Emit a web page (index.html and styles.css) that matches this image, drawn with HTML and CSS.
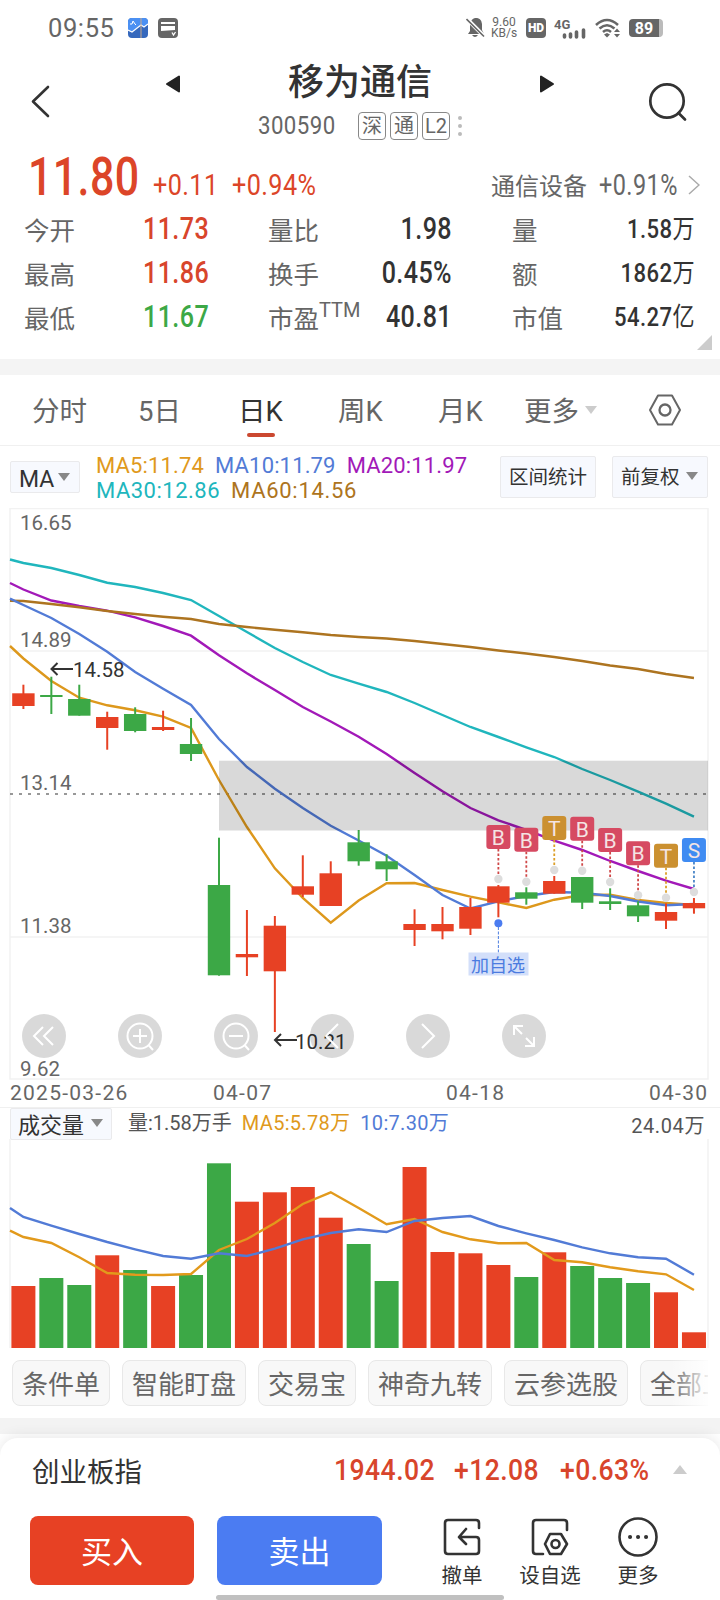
FILE: index.html
```
<!DOCTYPE html>
<html lang="zh-CN">
<head>
    <meta charset="UTF-8">
    <meta name="viewport" content="width=device-width, initial-scale=1.0">
    <title>移为通信 300590</title>
    <link rel="stylesheet" href="styles.css">
</head>
<body>
    <div class="status-bar">
        <span class="time">09:55</span>
        <svg class="app-icon" width="20" height="20" viewBox="0 0 20 20">
            <rect width="20" height="20" rx="4" fill="#3568bd"/>
            <path d="M0 12L4 14L13 7L16 9L20 6V4Q20 0 16 0H4Q0 0 0 4Z" fill="#4b90f3"/>
            <path d="M0 12L4 14L13 7L16 9L20 6" fill="none" stroke="#fff" stroke-width="1.2"/>
            <path d="M13 0V20" stroke="#c9a98b" stroke-width="1"/>
            <path d="M2 6h2l1-3 2 3 1 1" fill="none" stroke="#fff" stroke-width="1"/>
        </svg>
        <svg class="card-icon" width="20" height="20" viewBox="0 0 20 20">
            <rect width="20" height="20" rx="4" fill="#666"/>
            <path d="M3 4H17V6H3Z M3 8H17V12L3 13Z" fill="#fff"/>
            <path d="M14 14.5L15.5 17L17.5 14" fill="none" stroke="#fff" stroke-width="1.3"/>
        </svg>
        <div class="status-right">
            <svg width="20" height="20" viewBox="0 0 20 20">
                <path d="M9 0a6 6 0 0 1 7 6v6l2 4H2l2-3V6Q5 1 9 0Z M6 17h6q-3 4-6 0Z" fill="#666"/>
                <path d="M1 1L19 19" stroke="#fff" stroke-width="4"/>
                <path d="M0.500 1L18 18.500" stroke="#666" stroke-width="1.600"/>
            </svg>
            <span class="speed">9.60<br>KB/s</span>
            <span class="hd">HD</span>
            <svg class="signal" width="33" height="21" viewBox="0 0 33 21">
                <text x="0" y="10.500" class="net">4G</text>
                <path d="M10.500 19v-2M16.500 19v-3M22.500 19v-5M29.500 19v-7" stroke="#666" stroke-width="3.600" stroke-linecap="round"/>
            </svg>
            <svg width="26" height="20" viewBox="0 0 26 20">
                <path d="M1 7Q12 -3 23 7M4.500 10.500Q12 4 19.500 10.500M8 14Q12 10.500 16 14" fill="none" stroke="#666" stroke-width="2.600"/>
                <path d="M12 15l3 1.500-3 3-3-3Z" fill="#666"/>
                <path d="M19 14l3-3.500 3 3.500Z M19 16l3 3.500 3-3.500Z" fill="#666"/>
            </svg>
            <span class="battery">89</span>
        </div>
    </div>

    <header class="header">
        <svg class="back" width="20" height="34" viewBox="0 0 20 34"><path d="M17 2L2 16.500L17 31" fill="none" stroke="#333" stroke-width="2.600" stroke-linecap="round" stroke-linejoin="round"/></svg>
        <svg class="prev" width="16" height="18" viewBox="0 0 16 18"><path d="M14 1.500V16.500L2 9Z" fill="#222" stroke="#222" stroke-width="2" stroke-linejoin="round"/></svg>
        <div class="title">
            <h1>移为通信</h1>
            <div class="code-row">
                <span class="num code">300590</span>
                <span class="tag">深</span>
                <span class="tag">通</span>
                <span class="tag">L2</span>
                <svg width="4" height="20" viewBox="0 0 4 20" fill="#bbb"><circle cx="2" cy="2" r="2"/><circle cx="2" cy="10" r="2"/><circle cx="2" cy="18" r="2"/></svg>
            </div>
        </div>
        <svg class="next" width="16" height="18" viewBox="0 0 16 18"><path d="M2 1.500V16.500L14 9Z" fill="#222" stroke="#222" stroke-width="2" stroke-linejoin="round"/></svg>
        <svg class="search" width="40" height="40" viewBox="0 0 40 40" fill="none" stroke="#333" stroke-width="2.700"><circle cx="19" cy="19" r="16.700"/><path d="M30.500 31L37 37.500" stroke-linecap="round"/></svg>
    </header>

    <section class="quote">
        <div class="price-row">
            <span class="num price">11.80</span>
            <span class="num change">+0.11</span>
            <span class="num percent">+0.94%</span>
            <span class="sector">通信设备</span>
            <span class="num sector-change">+0.91%</span>
            <svg class="arrow" width="12" height="20" viewBox="0 0 12 20"><path d="M1 1L11 10L1 19" fill="none" stroke="#aaa" stroke-width="1.500"/></svg>
        </div>
        <div class="quote-grid">
            <span>今开</span><b class="num red">11.73</b><span>量比</span><b class="num mid">1.98</b><span>量</span><b class="num small">1.58<i>万</i></b>
            <span>最高</span><b class="num red">11.86</b><span>换手</span><b class="num mid">0.45%</b><span>额</span><b class="num small">1862<i>万</i></b>
            <span>最低</span><b class="num green">11.67</b><span>市盈<sup>TTM</sup></span><b class="num mid">40.81</b><span>市值</span><b class="num small">54.27<i>亿</i></b>
        </div>
        <div class="corner"></div>
    </section>

    <nav class="tabs">
        <span>分时</span>
        <span>5日</span>
        <span class="active">日K</span>
        <span>周K</span>
        <span>月K</span>
        <span class="more">更多<em class="caret light"></em></span>
        <svg width="32" height="32" viewBox="0 0 32 32" fill="none" stroke="#666" stroke-width="2"><path d="M9 1.500H23L31 16L23 30.500H9L1 16Z" stroke-linejoin="round"/><circle cx="16" cy="16" r="5.500" stroke-width="2.300"/></svg>
    </nav>

    <div class="ma-bar">
        <div class="select ma-select">MA<em class="caret"></em></div>
        <div class="ma-values">
            <span class="c5">MA5:11.74</span><span class="c10">MA10:11.79</span><span class="c20">MA20:11.97</span><br>
            <span class="c30">MA30:12.86</span><span class="c60">MA60:14.56</span>
        </div>
        <div class="select range">区间统计</div>
        <div class="select adjust">前复权<em class="caret"></em></div>
    </div>

    <div class="k-chart">
        <svg id="kChart" width="720" height="572" viewBox="0 508 720 572"></svg>
        <div class="controls">
            <svg viewBox="0 0 44 44"><path d="M21 13L12 22L21 31M31 13L22 22L31 31"/></svg>
            <svg viewBox="0 0 44 44"><circle cx="22" cy="22" r="12.500"/><path d="M15 22H29M22 15V29M30.500 31L35 36"/></svg>
            <svg viewBox="0 0 44 44"><circle cx="22" cy="22" r="12.500"/><path d="M15 22H29M30.500 31L35 36"/></svg>
            <svg viewBox="0 0 44 44"><path d="M28 10L16 22L28 34"/></svg>
            <svg viewBox="0 0 44 44"><path d="M16 10L28 22L16 34"/></svg>
            <svg viewBox="0 0 44 44"><path d="M12 21V12H21M12 12L20 20M24 24L32 32M32 23V32H23"/></svg>
        </div>
    </div>
    <div class="dates"><span>2025-03-26</span><span>04-07</span><span>04-18</span><span>04-30</span></div>

    <div class="volume">
        <div class="volume-head">
            <div class="select">成交量<em class="caret"></em></div>
            <span class="vol-now">量:1.58万手</span>
            <span class="c5">MA5:5.78万</span>
            <span class="c10">10:7.30万</span>
            <span class="vol-max">24.04万</span>
        </div>
        <svg id="volChart" width="720" height="209" viewBox="0 1139 720 209"></svg>
    </div>

    <div class="chips">
        <span>条件单</span><span>智能盯盘</span><span>交易宝</span><span>神奇九转</span><span>云参选股</span><span>全部工具</span>
    </div>

    <footer class="bottom">
        <div class="index-row">
            <span>创业板指</span>
            <b class="num i1">1944.02</b>
            <b class="num i2">+12.08</b>
            <b class="num i3">+0.63%</b>
            <em class="caret up"></em>
        </div>
        <div class="actions">
            <button class="buy">买入</button>
            <button class="sell">卖出</button>
            <div class="action">
                <svg width="40" height="40" viewBox="0 0 40 40"><path d="M37 11V6Q37 3 34 3H6Q3 3 3 6V34Q3 37 6 37H34Q37 37 37 34V23Q37 20 34 20H18M24 12L17 20L24 27"/></svg>
                撤单
            </div>
            <div class="action">
                <svg width="40" height="40" viewBox="0 0 40 40"><path d="M37 13V6Q37 3 34 3H6Q3 3 3 6V34Q3 37 6 37H13M20 17H31L37 27L31 37H20L15 27Z"/><circle cx="25.500" cy="27" r="4"/></svg>
                设自选
            </div>
            <div class="action">
                <svg width="40" height="40" viewBox="0 0 40 40"><circle cx="20" cy="20" r="18.500"/><path d="M12 20h.1M20 20h.1M28 20h.1" stroke-width="4"/></svg>
                更多
            </div>
        </div>
        <div class="home-bar"></div>
    </footer>

    <script>
        const RED = '#e74124', GREEN = '#3ca846';
        const COLORS = { ma5: '#dd981c', ma10: '#527bd6', ma20: '#a219b8', ma30: '#20b6bd', ma60: '#ad7420' };
        const up = 'rggrgrggrrrrggrrrrgrgggrr';

        // high, body top, body bottom, low
        const candles = [
            [684.7, 693.3, 706, 709], [676.7, 695, 697, 714], [684.7, 699, 715.7, 715.7], [711.7, 717, 728, 749.7],
            [707.3, 714, 731, 732.3], [710.7, 727, 730, 731], [718, 744, 754, 761], [837.7, 885, 975.3, 975.7],
            [910, 954, 957.3, 976], [916, 925.7, 971.3, 1032], [855.3, 886.3, 894.7, 897], [861.3, 873.3, 906, 906],
            [830, 842.3, 861.3, 865.7], [854.3, 861.3, 869.3, 881], [909.3, 924, 930, 946], [907, 924, 931.3, 939.3],
            [898, 907, 928.7, 935], [885, 886.3, 902.7, 917.3], [887.3, 892.3, 898.7, 904.7], [876, 881, 893.7, 893.7],
            [877, 877, 902.7, 909], [888.3, 901.3, 904, 910], [901.3, 905.3, 916.3, 922], [903.3, 912, 920.7, 929],
            [898, 903, 908.3, 913.7]
        ];

        // first value is at the left edge of the chart
        const lines = {
            ma30: [559.5, 563, 568, 575, 582.7, 587, 593, 600, 616, 632, 648, 662, 675, 683.7, 692, 703, 715, 727, 737, 747.3, 757, 769, 780, 791.7, 803.7, 816.7],
            ma20: [583, 589.5, 600.5, 606, 610.7, 617.3, 626, 635.7, 655.3, 673.3, 690, 707, 721.5, 736.7, 754, 773, 791.3, 808, 820.3, 830, 840.7, 850, 861, 871, 880.7, 889],
            ma60: [600.7, 601, 604, 607.3, 611, 614, 616.7, 619, 624, 627, 629.7, 632.3, 635, 637, 638.5, 641, 644, 647, 650.5, 653.5, 657, 661, 665.5, 669, 674, 678],
            ma5: [646, 658.5, 681, 697.7, 705.3, 710.3, 716.7, 728, 780, 827, 868.3, 898, 922.7, 900.5, 883.3, 883, 890, 896.7, 902.3, 908, 899.7, 895, 894.7, 900, 903, 905],
            ma10: [598.7, 605, 618, 634, 651.7, 672, 688.7, 705, 739, 767, 788.7, 808, 825.7, 840.5, 855.7, 875, 895, 908.5, 901.3, 896, 892, 892.7, 896, 901.5, 905.3, 904]
        };

        const volTops = [1286, 1278, 1285, 1255.3, 1270, 1286, 1275, 1163.3, 1201.7, 1192.3, 1187, 1217.7, 1244, 1281, 1167, 1252, 1253.3, 1265, 1277, 1252.3, 1266, 1278, 1283, 1292.3, 1332.3];
        const volLines = {
            ma5: [1230.7, 1237, 1243, 1257.3, 1273, 1274.7, 1275, 1274, 1250, 1239, 1223, 1204, 1192.3, 1208, 1224.3, 1219, 1232, 1239.3, 1243.3, 1243, 1260, 1262.3, 1267.3, 1271.3, 1274.3, 1290],
            ma10: [1208, 1217, 1225.7, 1234, 1242, 1249.3, 1256, 1258.7, 1253.3, 1256, 1248.7, 1239.3, 1233, 1229.3, 1232, 1221, 1218, 1216, 1226, 1233.3, 1240, 1247.3, 1253.3, 1257.3, 1258.7, 1274.7]
        };

        // candle index, letter, top of the badge
        const marks = [[17, 'B', 825], [18, 'B', 827.7], [19, 'T', 816], [20, 'B', 816.7], [21, 'B', 828], [22, 'B', 841.3], [23, 'T', 843.7], [24, 'S', 838]];
        const markColors = { B: ['#d64a62', '#cf4848'], T: ['#cb9030', '#dd9f28'], S: ['#3f8bf2', '#4a86c8'] };

        function x(i) {
            return 23.4 + 27.94 * i;
        }

        function color(i) {
            return up[i] === 'r' ? RED : GREEN;
        }

        function polyline(values, stroke) {
            const points = values.map((y, n) => (n === 0 ? 10 : x(n - 1)) + ',' + y).join(' ');
            return `<polyline points="${points}" fill="none" stroke="${stroke}" stroke-width="2.4"/>`;
        }

        function drawK() {
            let s = '<path d="M10 508.500H708V1079H10Z M10 651H708 M10 937H708" fill="none" stroke="#f2f2f2" stroke-width="1.500"/>';
            s += '<path d="M10 794H708" stroke="#777" stroke-width="1.500" stroke-dasharray="3 6"/>';
            s += [[530, '16.65'], [647, '14.89'], [790, '13.14'], [933, '11.38'], [1076, '9.62']]
                .map(t => `<text class="axis" x="20" y="${t[0]}">${t[1]}</text>`).join('');
            for (const name in lines) {
                s += polyline(lines[name], COLORS[name]);
            }
            candles.forEach((c, i) => {
                s += `<path d="M${x(i)} ${c[0]}V${c[3]}" stroke="${color(i)}" stroke-width="2"/>`;
                s += `<rect x="${x(i) - 11.2}" y="${c[1]}" width="22.400" height="${c[2] - c[1]}" fill="${color(i)}"/>`;
            });
            s += '<rect x="219" y="760.700" width="489" height="69.800" fill="#000" fill-opacity=".15"/>';
            marks.forEach(([i, letter, y]) => {
                const [fill, dash] = markColors[letter];
                s += `<path d="M${x(i)} ${y + 24}V${y + 50}" stroke="${dash}" stroke-width="1.800" stroke-dasharray="2.500 2"/>`;
                s += `<circle cx="${x(i)}" cy="${y + 54}" r="4.200" fill="#ddd"/>`;
                s += `<rect x="${x(i) - 12}" y="${y}" width="24" height="24" rx="3" fill="${fill}"/>`;
                s += `<text class="mark" x="${x(i)}" y="${y + 20}">${letter}</text>`;
            });
            s += '<path d="M73 669H52M57.500 663L51.500 669L57.500 675" class="pointer"/><text class="extreme" x="73" y="677">14.58</text>';
            s += '<path d="M297 1040H276M281 1034L275 1040L281 1046" class="pointer"/><text class="extreme" x="295" y="1049">10.21</text>';
            s += `<path d="M${x(17)} 927V953" stroke="#4a7de0" stroke-dasharray="3 1.500"/><circle cx="${x(17)}" cy="923.300" r="4" fill="#4b7cf0"/>`;
            s += '<rect x="468.500" y="952.500" width="60" height="23" fill="#d3dffa"/><text class="watch" x="498" y="972">加自选</text>';
            document.getElementById('kChart').innerHTML = s;
        }

        function drawVolume() {
            let s = '<path d="M10 1139V1348M708 1139V1348" stroke="#f2f2f2" stroke-width="1.500"/>';
            volTops.forEach((y, i) => {
                s += `<rect x="${x(i) - 12}" y="${y}" width="24" height="${1348 - y}" fill="${color(i)}"/>`;
            });
            s += polyline(volLines.ma5, '#e29a1c') + polyline(volLines.ma10, COLORS.ma10);
            document.getElementById('volChart').innerHTML = s;
        }

        drawK();
        drawVolume();
    </script>
</body>
</html>
```
FILE: styles.css
```
* {
    box-sizing: border-box;
}

body {
    margin: 0;
    width: 720px;
    height: 1600px;
    overflow: hidden;
    background: #fff;
    color: #333;
    font-family: Roboto, "Noto Sans CJK SC", sans-serif;
}

svg {
    display: block;
    flex: none;
}

em, i {
    font-style: normal;
}

/* narrow figures */
.num {
    display: inline-block;
    font-weight: 400;
    transform: scaleX(.84);
    transform-origin: left center;
    white-space: nowrap;
    letter-spacing: .5px;
}

.red { color: #d8452b; }
.green { color: #3ca846; }
.c5 { color: #e0991c; }
.c10 { color: #527bd6; }
.c20 { color: #a219b8; }
.c30 { color: #20b6bd; }
.c60 { color: #ad7420; }

.caret {
    display: inline-block;
    border: 6px solid transparent;
    border-top: 8px solid #888;
    border-bottom: 0;
}

.caret.light {
    border-top-color: #ccc;
}

.caret.up {
    border-width: 0 7px 9px;
    border-bottom: 9px solid #ccc;
}

/* status bar */
.status-bar {
    display: flex;
    align-items: center;
    height: 56px;
    padding: 0 48px;
    color: #666;
}

.time {
    width: 80px;
    font-size: 25.5px;
    letter-spacing: .6px;
    line-height: 58px;
}

.card-icon {
    margin-left: 10px;
}

.status-right {
    display: flex;
    align-items: center;
    margin-left: auto;
    margin-right: 9px;
}

.speed {
    width: 28px;
    margin: 0 8px 0 4px;
    font-size: 12px;
    line-height: 11px;
    text-align: center;
}

.hd {
    width: 20px;
    margin-right: 8px;
    border-radius: 4px;
    background: #666;
    color: #fff;
    font-size: 12px;
    font-weight: 900;
    line-height: 20px;
    text-align: center;
}

.signal {
    margin-right: 8px;
}

.net {
    font: 700 13px Roboto;
    fill: #666;
}

.battery {
    width: 34px;
    height: 18px;
    margin-left: 8px;
    border-radius: 4px;
    border-right: 4px solid #bbb;
    background: #666;
    color: #fff;
    font-size: 16px;
    font-weight: 700;
    line-height: 19px;
    text-align: center;
}

/* header */
.header {
    display: flex;
    height: 92px;
    padding-left: 31px;
}

.back { margin-top: 29px; }
.prev { margin: 19px 0 0 114px; }

.title {
    width: 236px;
    margin-left: 62px;
}

.title h1 {
    height: 50px;
    margin: 0;
    padding-left: 45px;
    font-size: 36px;
    font-weight: 500;
    line-height: 54px;
    white-space: nowrap;
}

.code-row {
    display: flex;
    align-items: center;
    height: 40px;
    padding-left: 15px;
    color: #666;
}

.code {
    width: 100px;
    font-size: 26.5px;
    line-height: 30px;
    padding-bottom: 3px;
}

.tag {
    width: 28px;
    height: 28px;
    margin-right: 4px;
    border: 1px solid #888;
    border-radius: 4px;
    font-size: 20px;
    line-height: 27px;
    text-align: center;
}

.code-row svg { margin-left: 4px; }
.next { margin: 19px 0 0 60px; }
.search { margin: 26px 0 0 93px; }

/* quote */
.quote {
    position: relative;
    height: 227px;
    border-bottom: 16px solid #f4f4f4;
}

.price-row {
    display: flex;
    align-items: baseline;
    height: 55px;
    padding-left: 28px;
    color: #dc4528;
    font-size: 30px;
    line-height: 59px;
}

.price {
    width: 125px;
    font-size: 53px;
    font-weight: 500;
    transform: scaleX(.81);
}

.change { width: 79px; }
.percent { width: 259px; }

.sector {
    width: 108px;
    color: #666;
    font-size: 24px;
}

.sector-change {
    width: 89px;
    color: #666;
    font-size: 29px;
    transform: scaleX(.81);
}

.arrow {
    align-self: flex-end;
    margin-bottom: 8px;
}

.quote-grid {
    display: grid;
    grid-template-columns: 119px 125px 90px 94px 60px 183px;
    grid-auto-rows: 44px;
    padding: 6px 0 0 24px;
    color: #333;
    line-height: 44px;
}

.quote-grid span {
    color: #666;
    font-size: 25.5px;
    white-space: nowrap;
}

.quote-grid span:nth-child(6n+5) {
    margin-left: 60px;
}

.quote-grid sup {
    display: inline-block;
    font-size: 20px;
    line-height: 20px;
    vertical-align: 11px;
}

.quote-grid .num {
    font-size: 31px;
    font-weight: 500;
    line-height: 40px;
    transform: scaleX(.81);
}

.quote-grid .mid {
    text-align: right;
    transform-origin: right center;
}

.quote-grid .small {
    display: flex;
    justify-content: flex-end;
    align-items: baseline;
    font-size: 26px;
    transform: scaleX(.85);
    transform-origin: right center;
}

.quote-grid i {
    font-size: 26px;
    font-weight: 400;
}

.corner {
    position: absolute;
    right: 8px;
    bottom: 9px;
    border-left: 15px solid transparent;
    border-bottom: 15px solid #ccc;
}

/* tabs */
.tabs {
    display: flex;
    align-items: center;
    height: 71px;
    padding-left: 32px;
    border-bottom: 1px solid #f0f0f0;
    color: #666;
    font-size: 27.5px;
}

.tabs span {
    width: 100px;
    height: 70px;
    line-height: 74px;
}

.tabs span:first-child { width: 106px; }

.tabs .active {
    position: relative;
    color: #333;
}

.tabs .active::after {
    content: "";
    position: absolute;
    left: 9px;
    bottom: 8px;
    width: 28px;
    height: 4px;
    border-radius: 2px;
    background: #cb4830;
}

.tabs .more {
    width: 125px;
    margin-left: -14px;
}

.tabs .caret {
    margin-left: 6px;
    vertical-align: 7px;
}

/* indicator bar */
.ma-bar {
    display: flex;
    height: 62px;
    padding-left: 10px;
}

.select {
    border: 1px solid #eaeaec;
    border-radius: 2px;
    background: #f7f9fe;
    white-space: nowrap;
}

.ma-select {
    width: 70px;
    height: 32px;
    margin-top: 15px;
    padding-left: 8px;
    font-size: 23px;
    line-height: 35px;
}

.ma-select .caret {
    margin-left: 4px;
    vertical-align: 6px;
}

.ma-values {
    width: 420px;
    padding: 7px 0 0 16px;
    font-size: 22px;
    line-height: 25px;
    letter-spacing: .15px;
}

.ma-values span {
    margin-right: 11px;
}

.ma-values .c30 {
    letter-spacing: .5px;
}

.ma-values .c60 {
    letter-spacing: .7px;
}

.range, .adjust {
    width: 96px;
    height: 42px;
    margin-top: 10px;
    padding-left: 8px;
    font-size: 19.5px;
    line-height: 42px;
}

.adjust {
    margin-left: 16px;
}

.adjust .caret {
    margin-left: 6px;
    vertical-align: 4px;
}

/* candle chart */
.k-chart {
    position: relative;
    height: 572px;
}

.axis {
    fill: #666;
    font-size: 20.5px;
}

.extreme {
    fill: #333;
    font-size: 20.5px;
}

.pointer {
    fill: none;
    stroke: #333;
    stroke-width: 2;
}

.mark {
    fill: #f4e4e4;
    font-size: 21px;
    text-anchor: middle;
}

.watch {
    fill: #4b7be0;
    font-size: 18px;
    text-anchor: middle;
}

.controls {
    position: absolute;
    left: 22px;
    top: 506px;
    display: flex;
    gap: 52px;
}

.controls svg {
    width: 44px;
    height: 44px;
    border-radius: 50%;
    background: rgba(0, 0, 0, .15);
    fill: none;
    stroke: #fff;
    stroke-width: 2;
}

.dates {
    display: grid;
    grid-template-columns: 203px 233px 203px auto;
    height: 28px;
    padding-left: 10px;
    border-bottom: 1px solid #f0f0f0;
    color: #666;
    font-size: 21px;
    letter-spacing: 1.25px;
    line-height: 27px;
}

/* volume */
.volume-head {
    display: flex;
    height: 31px;
    padding: 0 15px 0 10px;
    color: #555;
    font-size: 20px;
    line-height: 30px;
}

.volume-head .select {
    width: 102px;
    height: 32px;
    padding-left: 7px;
    color: #333;
    font-size: 22px;
    line-height: 34px;
}

.volume-head .caret {
    margin-left: 7px;
    vertical-align: 6px;
}

.vol-now { margin-left: 16px; }

.volume-head .c5, .volume-head .c10 {
    margin-left: 10px;
    letter-spacing: .3px;
}

.vol-max {
    margin-left: auto;
    letter-spacing: .6px;
    line-height: 36px;
}

/* shortcut chips */
.chips {
    position: relative;
    display: flex;
    gap: 12px;
    width: 708px;
    height: 70px;
    padding: 12px 0 0 12px;
    overflow: hidden;
}

.chips span {
    flex: none;
    height: 46px;
    padding: 0 9px;
    border: 1px solid #e8e8e8;
    border-radius: 8px;
    background: #f8f8f8;
    color: #666;
    font-size: 26px;
    line-height: 48px;
}

.chips::after {
    content: "";
    position: absolute;
    right: 0;
    top: 0;
    width: 38px;
    height: 70px;
    background: linear-gradient(to right, rgba(255, 255, 255, 0), rgba(255, 255, 255, .9));
}

/* bottom panel */
.bottom {
    position: relative;
    height: 162px;
    margin-top: 20px;
    border-radius: 18px 18px 0 0;
    background: #fff;
    box-shadow: 0 -2px 14px rgba(0, 0, 0, .09), 0 -4px 0 #fff;
}

.bottom::before {
    content: "";
    position: absolute;
    z-index: -1;
    left: 0;
    top: -20px;
    width: 720px;
    height: 16px;
    background: #f3f3f3;
}

.index-row {
    display: flex;
    align-items: center;
    height: 63px;
    padding-left: 32px;
    color: #d8452b;
    font-size: 30px;
}

.index-row span {
    width: 302px;
    color: #333;
    font-size: 27.5px;
}

.index-row .num {
    font-weight: 500;
    transform: scaleX(.885);
}

.i1 { width: 120px; }
.i2 { width: 106px; }
.i3 { width: 113px; }

.actions {
    display: flex;
    height: 93px;
    padding: 15px 0 0 30px;
}

.buy, .sell {
    width: 164px;
    height: 69px;
    margin-right: 23px;
    padding: 0 0 3px;
    border: 0;
    border-radius: 8px;
    background: #e74124;
    color: #fff;
    font: 31px "Noto Sans CJK SC", sans-serif;
}

.sell {
    width: 165px;
    background: #4b7cf2;
}

.action {
    display: flex;
    flex-direction: column;
    align-items: center;
    width: 88px;
    padding-top: 1px;
    font-size: 20.5px;
    line-height: 38px;
}

.action:nth-child(3) {
    margin-left: 13px;
}

.action svg {
    fill: none;
    stroke: #333;
    stroke-width: 2.6;
    stroke-linecap: round;
    stroke-linejoin: round;
}

.home-bar {
    width: 288px;
    height: 5px;
    margin: 1px auto 0;
    border-radius: 3px;
    background: #c0c0c0;
}
```
